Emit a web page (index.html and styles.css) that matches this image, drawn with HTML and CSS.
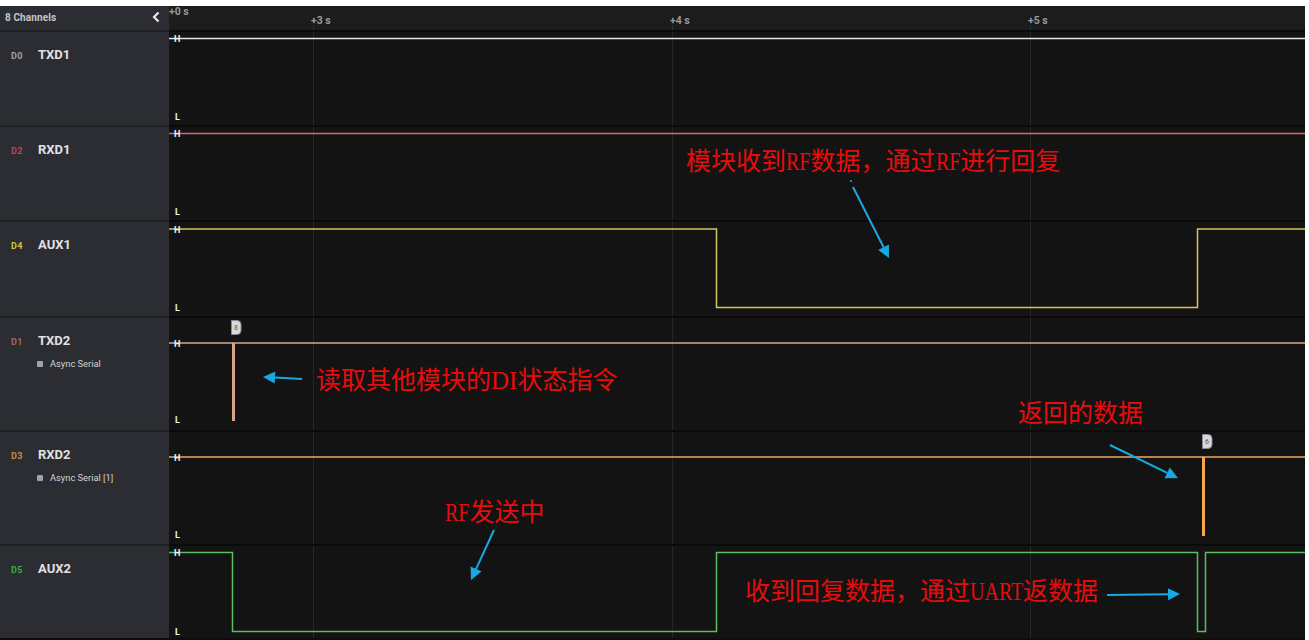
FILE: index.html
```html
<!DOCTYPE html>
<html lang="zh-CN">
<head>
<meta charset="utf-8">
<title>Logic capture</title>
<link rel="stylesheet" href="styles.css">
</head>
<body>
<div class="app">
  <div class="header">
    <div class="side-head">
      <span class="count">8 Channels</span>
      <svg class="collapse" width="10" height="12" viewBox="0 0 10 12"><polyline points="7.5,1.5 3,6 7.5,10.5" fill="none" stroke="#e8e8e8" stroke-width="2.2"/></svg>
    </div>
    <div class="ruler">
      <svg width="1136" height="24" viewBox="0 0 1136 24">
        <g class="tick-lines">
          <line x1="144.5" y1="19" x2="144.5" y2="24"/>
          <line x1="503.5" y1="19" x2="503.5" y2="24"/>
          <line x1="861.5" y1="19" x2="861.5" y2="24"/>
        </g>
        <g class="tick-labels">
          <text x="0" y="9">+0 s</text>
          <text x="142" y="18">+3 s</text>
          <text x="501" y="18">+4 s</text>
          <text x="859" y="18">+5 s</text>
        </g>
      </svg>
    </div>
  </div>

  <div class="row row-std">
    <div class="chan">
      <div class="chan-title"><span class="pin pin-d0">D0</span><span class="name">TXD1</span></div>
    </div>
    <div class="trace">
      <svg width="1136" height="93" viewBox="0 0 1136 93">
        <g class="grid"><line x1="144.5" y1="0" x2="144.5" y2="93"/><line x1="503.5" y1="0" x2="503.5" y2="93"/><line x1="861.5" y1="0" x2="861.5" y2="93"/></g>
        <path class="wave wave-d0" d="M0 6.5 H1136"/>
        <text class="lvl" x="5" y="10">H</text>
        <text class="lvl" x="6" y="88">L</text>
      </svg>
    </div>
  </div>

  <div class="row row-std">
    <div class="chan">
      <div class="chan-title"><span class="pin pin-d2">D2</span><span class="name">RXD1</span></div>
    </div>
    <div class="trace">
      <svg width="1136" height="93" viewBox="0 0 1136 93">
        <g class="grid"><line x1="144.5" y1="0" x2="144.5" y2="93"/><line x1="503.5" y1="0" x2="503.5" y2="93"/><line x1="861.5" y1="0" x2="861.5" y2="93"/></g>
        <path class="wave wave-d2" d="M0 6.5 H1136"/>
        <text class="lvl" x="5" y="10">H</text>
        <text class="lvl" x="6" y="88">L</text>
      </svg>
    </div>
  </div>

  <div class="row row-tall3">
    <div class="chan">
      <div class="chan-title"><span class="pin pin-d4">D4</span><span class="name">AUX1</span></div>
    </div>
    <div class="trace">
      <svg width="1136" height="94" viewBox="0 0 1136 94">
        <g class="grid"><line x1="144.5" y1="0" x2="144.5" y2="94"/><line x1="503.5" y1="0" x2="503.5" y2="94"/><line x1="861.5" y1="0" x2="861.5" y2="94"/></g>
        <path class="wave wave-d4" d="M0 7 H547.5 V85.5 H1028.5 V7 H1136"/>
        <text class="lvl" x="5" y="10.5">H</text>
        <text class="lvl" x="6" y="89">L</text>
      </svg>
    </div>
  </div>

  <div class="row row-dec">
    <div class="chan">
      <div class="chan-title"><span class="pin pin-d1">D1</span><span class="name">TXD2</span></div>
      <div class="analyzer"><span class="dot"></span>Async Serial</div>
    </div>
    <div class="trace">
      <svg width="1136" height="112" viewBox="0 0 1136 112">
        <g class="grid"><line x1="144.5" y1="0" x2="144.5" y2="112"/><line x1="503.5" y1="0" x2="503.5" y2="112"/><line x1="861.5" y1="0" x2="861.5" y2="112"/></g>
        <path class="wave wave-d1" d="M0 25 H1136"/>
        <rect class="burst burst-d1" x="63" y="25" width="3" height="78"/>
        <g class="frame">
          <path d="M62.5 2.5 H68 Q72 2.5 72 6.5 V12.5 Q72 16.5 68 16.5 H62.5 Z"/>
          <text x="67" y="12">8</text>
        </g>
        <text class="lvl" x="5" y="28.5">H</text>
        <text class="lvl" x="6" y="105">L</text>
      </svg>
    </div>
  </div>

  <div class="row row-dec">
    <div class="chan">
      <div class="chan-title"><span class="pin pin-d3">D3</span><span class="name">RXD2</span></div>
      <div class="analyzer"><span class="dot"></span>Async Serial [1]</div>
    </div>
    <div class="trace">
      <svg width="1136" height="112" viewBox="0 0 1136 112">
        <g class="grid"><line x1="144.5" y1="0" x2="144.5" y2="112"/><line x1="503.5" y1="0" x2="503.5" y2="112"/><line x1="861.5" y1="0" x2="861.5" y2="112"/></g>
        <path class="wave wave-d3" d="M0 25 H1136"/>
        <rect class="burst burst-d3" x="1033" y="25" width="3" height="79"/>
        <g class="frame">
          <path d="M1033.5 2.5 H1039 Q1043 2.5 1043 6.5 V12.5 Q1043 16.5 1039 16.5 H1033.5 Z"/>
          <text x="1038" y="12">6</text>
        </g>
        <text class="lvl" x="5" y="28.5">H</text>
        <text class="lvl" x="6" y="106">L</text>
      </svg>
    </div>
  </div>

  <div class="row row-last">
    <div class="chan">
      <div class="chan-title"><span class="pin pin-d5">D5</span><span class="name">AUX2</span></div>
    </div>
    <div class="trace">
      <svg width="1136" height="92" viewBox="0 0 1136 92">
        <g class="grid"><line x1="144.5" y1="0" x2="144.5" y2="92"/><line x1="503.5" y1="0" x2="503.5" y2="92"/><line x1="861.5" y1="0" x2="861.5" y2="92"/></g>
        <path class="wave wave-d5" d="M0 6.5 H63.5 V85.5 H547.5 V6.5 H1028.5 V85.5 H1036.5 V6.5 H1136"/>
        <text class="lvl" x="5" y="10">H</text>
        <text class="lvl" x="6" y="89">L</text>
      </svg>
    </div>
  </div>

  <!-- callouts drawn over the capture; coordinates are page pixels -->
  <svg class="pointers" width="1305" height="634" viewBox="0 6 1305 634">
    <g class="ptr">
      <line x1="853" y1="187" x2="883.6" y2="247.3"/>
      <polygon points="889,258 878.2,250 888.9,244.6"/>
      <circle cx="851" cy="181" r="1"/>
      <line x1="302" y1="379" x2="275" y2="377.6"/>
      <polygon points="263,377 275.3,371.6 274.7,383.6"/>
      <line x1="1110" y1="445" x2="1167.2" y2="472.8"/>
      <polygon points="1178,478 1164.6,478.2 1169.8,467.4"/>
      <line x1="494" y1="530" x2="476" y2="569.1"/>
      <polygon points="471,580 470.6,566.6 481.5,571.6"/>
      <line x1="1107" y1="595" x2="1168" y2="594.2"/>
      <polygon points="1180,594 1168.1,600.2 1167.9,588.2"/>
    </g>
  </svg>
  <div class="note note-reply">模块收到<span class="lat lat-2">RF</span>数据，通过<span class="lat lat-2">RF</span>进行回复</div>
  <div class="note note-query">读取其他模块的DI状态指令</div>
  <div class="note note-return">返回的数据</div>
  <div class="note note-sending"><span class="lat lat-2">RF</span>发送中</div>
  <div class="note note-uart">收到回复数据，通过<span class="lat lat-4">UART</span>返数据</div>
</div>
</body>
</html>
```

FILE: styles.css
```css
html, body {
  margin: 0;
  padding: 0;
  background: #ffffff;
}

body {
  width: 1309px;
  height: 640px;
  overflow: hidden;
  font-family: Roboto, "Noto Sans", sans-serif;
}

.app {
  position: relative;
  margin-top: 6px;
  width: 1305px;
  height: 634px;
  display: flex;
  flex-direction: column;
  background: #131313;
}

/* ---------- header: channel count + time ruler ---------- */
.header {
  display: flex;
  height: 24px;
  flex: none;
}

.side-head {
  width: 169px;
  flex: none;
  display: flex;
  align-items: center;
  justify-content: space-between;
  padding: 0 8px 0 5px;
  box-sizing: border-box;
  background: #2c2d32;
}

.count {
  font-size: 10px;
  font-weight: 700;
  color: #c4c5c8;
  letter-spacing: 0.1px;
  margin-top: -2px;
}

.collapse {
  display: block;
  margin-top: -3px;
}

.ruler {
  flex: 1;
  background: #1c1c1c;
  overflow: hidden;
}

.ruler svg {
  display: block;
}

.tick-lines line {
  stroke: #2e2e2e;
  stroke-width: 1;
}

.tick-labels text {
  font-family: Roboto, sans-serif;
  font-size: 10.5px;
  font-weight: 700;
  fill: #9a9a9a;
}

/* ---------- channel rows ---------- */
.row {
  display: flex;
  flex: none;
  box-sizing: border-box;
  border-top: 2px solid #0a0a0a;
}

.row-std { height: 95px; }
.row-tall3 { height: 96px; }
.row-dec { height: 114px; }
.row-last {
  height: 96px;
  border-bottom: 2px solid #0d0d0d;
}

.chan {
  width: 169px;
  flex: none;
  box-sizing: border-box;
  background: #2c2d32;
  padding: 15px 0 0 11px;
  margin-top: -2px;
  border-top: 2px solid #212226;
}

.chan-title {
  display: flex;
  align-items: baseline;
  height: 14px;
}

.pin {
  width: 27px;
  font-size: 9px;
  font-weight: 700;
  letter-spacing: 0.3px;
}

.pin-d0 { color: #a2a2a4; }
.pin-d2 { color: #b9485b; }
.pin-d4 { color: #d6c83c; }
.pin-d1 { color: #9c6c5e; }
.pin-d3 { color: #c98b42; }
.pin-d5 { color: #3eae4c; }

.name {
  font-size: 13px;
  font-weight: 700;
  color: #e2e2e4;
}

.analyzer {
  display: flex;
  align-items: center;
  margin: 11px 0 0 26px;
  font-size: 9.3px;
  color: #d2d3d6;
}

.dot {
  width: 6px;
  height: 6px;
  border-radius: 1px;
  background: #9ea3b0;
  margin-right: 7px;
}

.trace {
  flex: 1;
  overflow: hidden;
}

.trace svg {
  display: block;
}

.grid line {
  stroke: #262626;
  stroke-width: 1;
}

.wave {
  fill: none;
  stroke-width: 1.5;
}

.wave-d0 { stroke: #e4e4e4; }
.wave-d2 { stroke: #e0606e; }
.wave-d4 { stroke: #d2c662; }
.wave-d1 { stroke: #dba690; }
.wave-d3 { stroke: #f0aa60; }
.wave-d5 { stroke: #5cbc62; }

.burst-d1 { fill: #d9a28c; }
.burst-d3 { fill: #f5a94e; }

.frame path {
  fill: #d8d8da;
  stroke: #8a8a8c;
  stroke-width: 1;
}

.frame text {
  font-family: Roboto, sans-serif;
  font-size: 7px;
  fill: #555;
  text-anchor: middle;
}

.lvl {
  font-family: Roboto, sans-serif;
  font-size: 9px;
  font-weight: 700;
  fill: #f2f2f2;
}

/* ---------- callouts ---------- */
.pointers {
  position: absolute;
  left: 0;
  top: 0;
  pointer-events: none;
}

.ptr line {
  stroke: #19a9e2;
  stroke-width: 2;
}

.ptr polygon,
.ptr circle {
  fill: #19a9e2;
}

.note {
  position: absolute;
  font-family: "Liberation Serif", "Noto Sans CJK SC", serif;
  font-size: 25px;
  line-height: 25px;
  color: #e80c0c;
  white-space: nowrap;
}

/* latin runs are squeezed to half-width cells */
.note .lat {
  display: inline-block;
  transform: scaleX(0.8);
  transform-origin: left center;
}

.note .lat-2 { margin-right: -6px; }
.note .lat-4 { margin-right: -13.5px; }

.note-reply { left: 686px; top: 143px; }
.note-query { left: 316px; top: 362px; }
.note-return { left: 1018px; top: 395px; }
.note-sending { left: 445px; top: 494px; }
.note-uart { left: 745px; top: 573px; }
```
